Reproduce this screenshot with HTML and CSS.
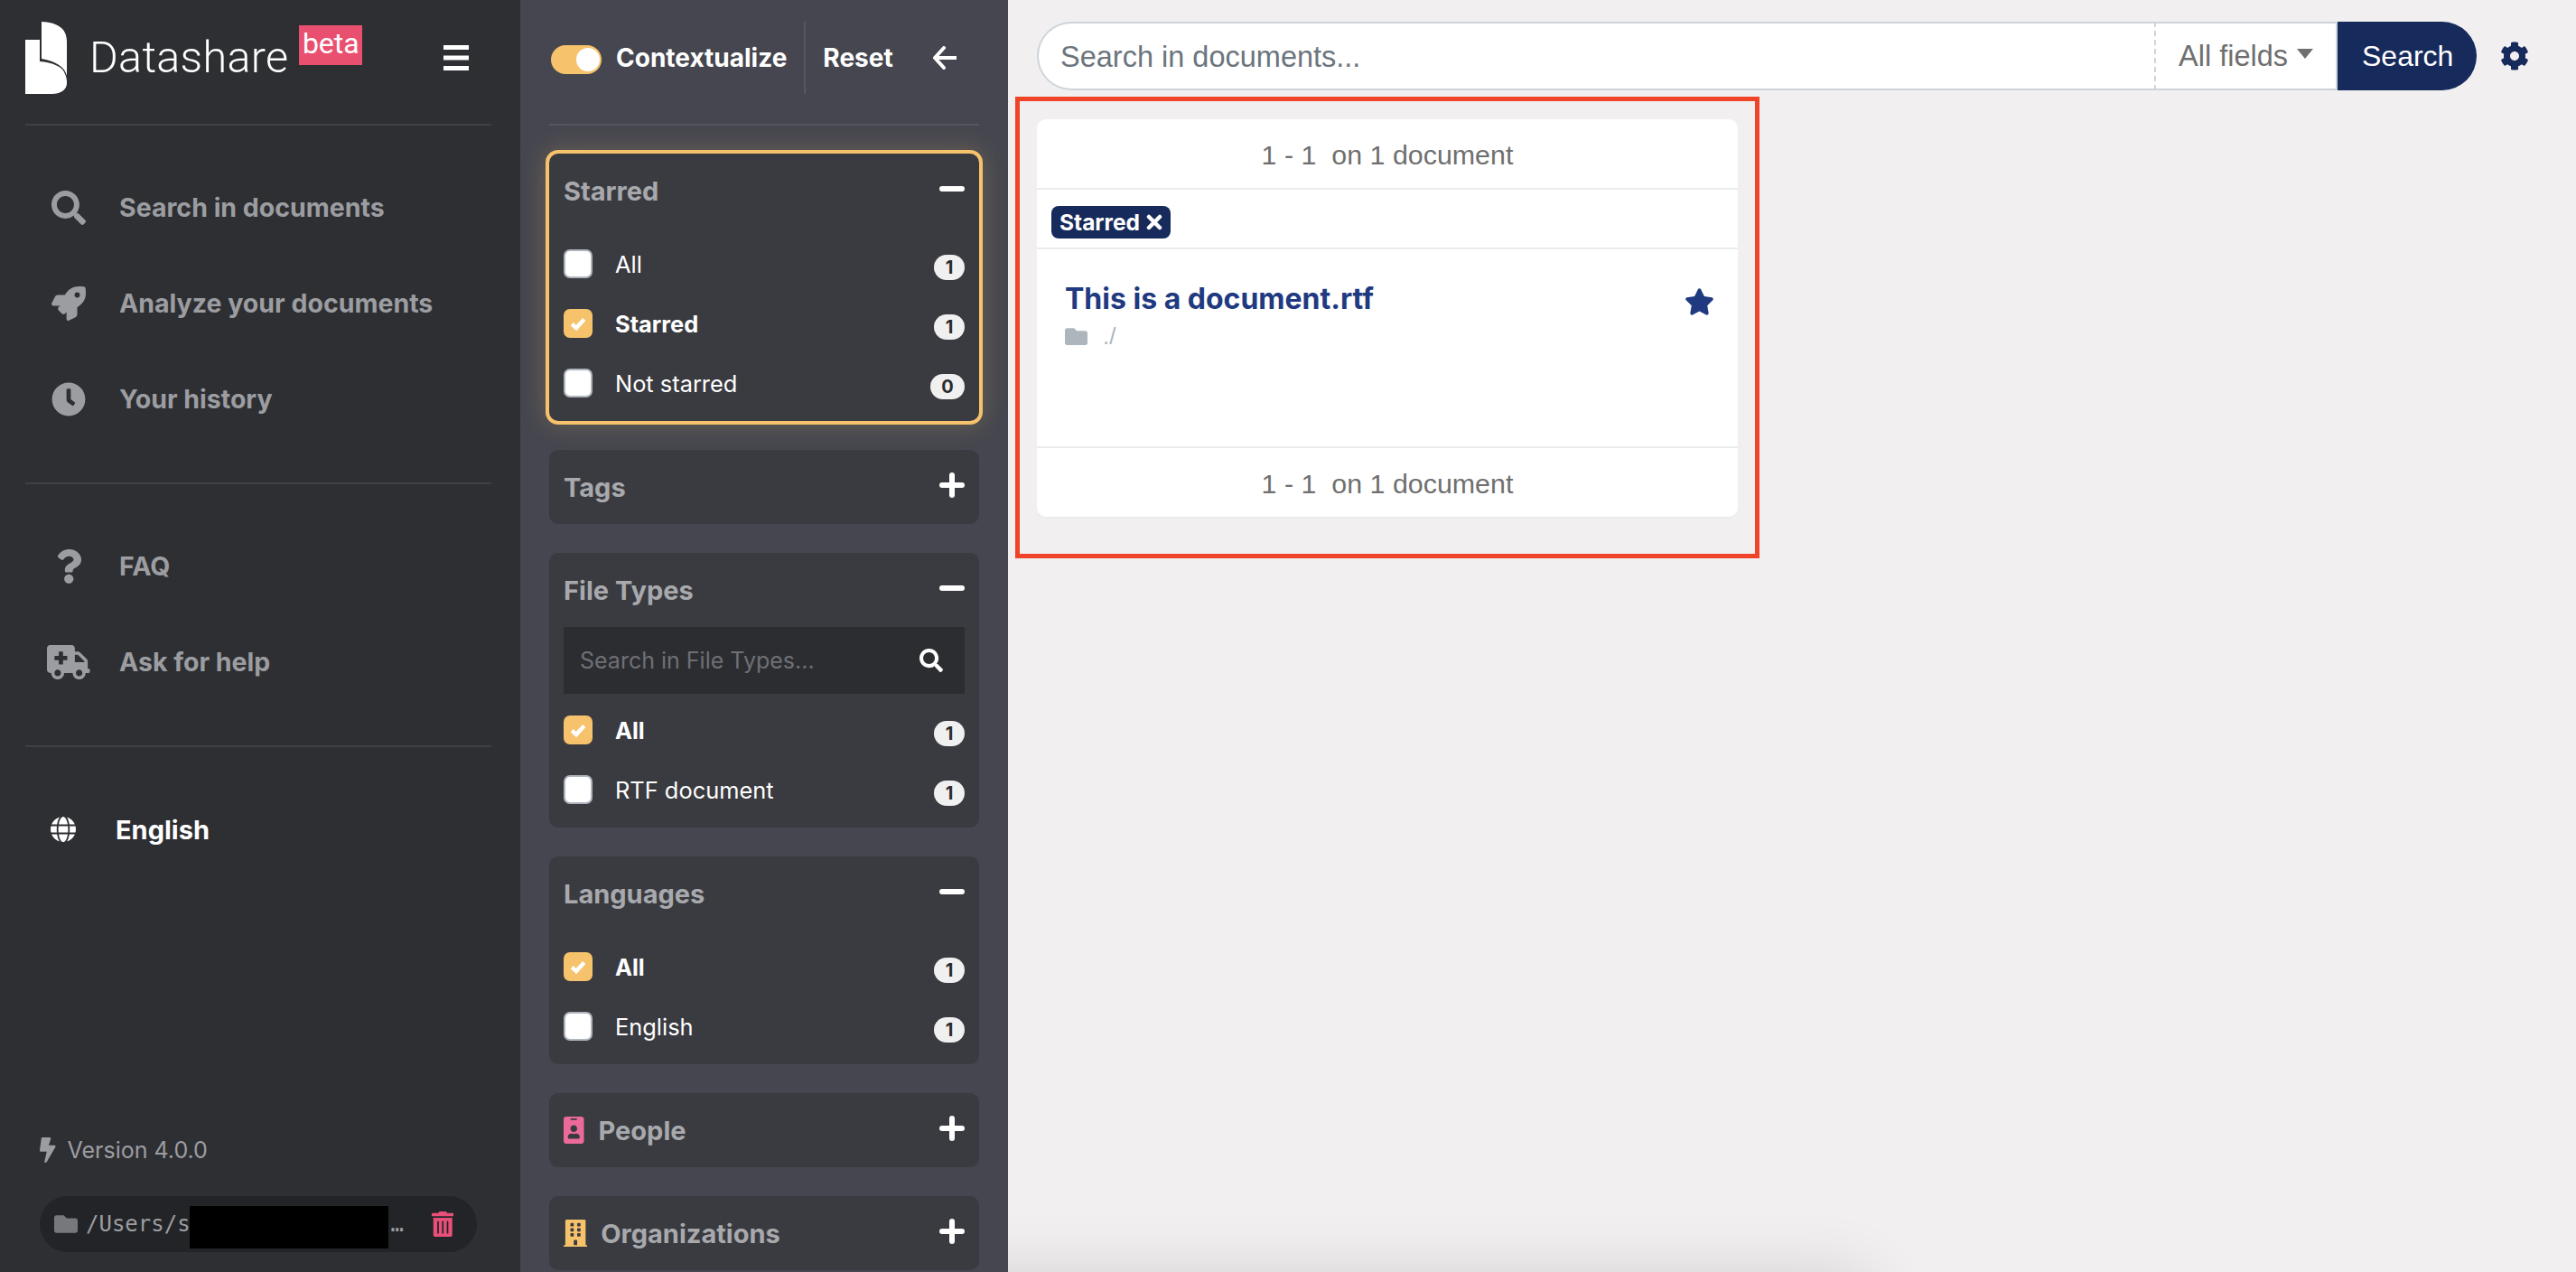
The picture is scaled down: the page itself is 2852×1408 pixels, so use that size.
FILE: index.html
```html
<!DOCTYPE html>
<html>

<head>
  <title>Datashare</title>
  <meta charset="UTF-8">
  <link rel="stylesheet" href="styles.css">
</head>

<body>
  <div class="sidebar">
    <div class="brand">
      <svg class="logo" viewBox="0 0 46 80">
        <path d="M18 0C34 1 46 6 46 22V60C44 50 34 44 18 41Z" />
        <path d="M0 20H16V44C30 45 42 50 44 58C46 62 46 66 46 68C46 76 38 80 30 80H0Z" />
      </svg>
      <span class="brand-name">Datashare</span>
      <span class="beta">beta</span>
      <svg class="bars" viewBox="0 0 28 28">
        <rect y="0" width="28" height="5" />
        <rect y="11.5" width="28" height="5" />
        <rect y="23" width="28" height="5" />
      </svg>
    </div>

    <div class="nav-group">
      <div class="nav-item">
        <span class="nav-icon"><svg viewBox="0 0 512 512"><path d="M505 442.7L405.3 343c-4.5-4.5-10.6-7-17-7H372c27.6-35.3 44-79.7 44-128C416 93.1 322.9 0 208 0S0 93.1 0 208s93.1 208 208 208c48.3 0 92.7-16.4 128-44v16.3c0 6.4 2.5 12.5 7 17l99.7 99.7c9.4 9.4 24.6 9.4 33.9 0l28.3-28.3c9.4-9.4 9.4-24.6.1-34zM208 336c-70.7 0-128-57.2-128-128 0-70.7 57.2-128 128-128 70.7 0 128 57.2 128 128 0 70.7-57.2 128-128 128z" /></svg></span>
        Search in documents
      </div>
      <div class="nav-item">
        <span class="nav-icon"><svg viewBox="0 0 512 512"><path d="M505.12 19.09c-1.19-5.53-6.66-11-12.21-12.19C460.72 0 435.51 0 410.41 0 307.18 0 245.27 55.2 199.05 128H94.84c-16.35.02-35.56 11.88-42.89 26.48L2.52 253.3A28.4 28.4 0 0 0 0 264a24 24 0 0 0 24 24h103.82l-22.48 22.47c-11.36 11.36-13 32.26 0 45.25l50.91 50.91c11.16 11.19 32.16 13.16 45.28 0l22.47-22.47V488a24 24 0 0 0 24 24 28.56 28.56 0 0 0 10.71-2.52l98.73-49.39c14.63-7.3 26.51-26.5 26.51-42.86V312.8c72.6-46.31 128.03-108.41 128.03-211.1.02-25.2.02-50.4-6.93-82.61zM384.04 168a40 40 0 1 1 40.01-40 40.02 40.02 0 0 1-40.01 40z" /></svg></span>
        Analyze your documents
      </div>
      <div class="nav-item">
        <span class="nav-icon"><svg viewBox="0 0 512 512"><path d="M256 8C119 8 8 119 8 256s111 248 248 248 248-111 248-248S393 8 256 8zm92.49 313l-20 25a16 16 0 0 1-22.49 2.5l-67-49.72a40 40 0 0 1-15-31.23V112a16 16 0 0 1 16-16h32a16 16 0 0 1 16 16v144l58 42.5a16 16 0 0 1 2.49 22.5z" /></svg></span>
        Your history
      </div>
    </div>

    <div class="nav-group">
      <div class="nav-item">
        <span class="nav-icon"><svg viewBox="0 0 384 512"><path d="M202.021 0C122.202 0 70.503 32.703 29.914 91.026c-7.363 10.58-5.093 25.086 5.178 32.874l43.138 32.709c10.373 7.865 25.132 6.026 33.253-4.148 25.049-31.381 43.63-49.449 82.757-49.449 30.764 0 68.816 19.799 68.816 49.631 0 22.552-18.617 34.134-48.993 51.164-35.423 19.86-82.299 44.576-82.299 106.405V320c0 13.255 10.745 24 24 24h72.471c13.255 0 24-10.745 24-24v-5.773c0-42.86 125.268-44.645 125.268-160.627C377.504 66.256 286.902 0 202.021 0zM192 373.459c-38.196 0-69.271 31.075-69.271 69.271 0 38.195 31.075 69.27 69.271 69.27s69.271-31.075 69.271-69.271-31.075-69.27-69.271-69.27z" /></svg></span>
        FAQ
      </div>
      <div class="nav-item">
        <span class="nav-icon"><svg viewBox="0 0 640 512"><path d="M624 352h-16V243.9c0-12.7-5.1-24.9-14.1-33.9L494 110.1c-9-9-21.2-14.1-33.9-14.1H416V48c0-26.5-21.5-48-48-48H48C21.5 0 0 21.5 0 48v320c0 26.5 21.5 48 48 48h16c0 53 43 96 96 96s96-43 96-96h128c0 53 43 96 96 96s96-43 96-96h48c8.8 0 16-7.2 16-16v-32c0-8.8-7.2-16-16-16zM160 464c-26.5 0-48-21.5-48-48s21.5-48 48-48 48 21.5 48 48-21.5 48-48 48zm144-248c0 4.4-3.6 8-8 8h-56v56c0 4.4-3.6 8-8 8h-48c-4.4 0-8-3.6-8-8v-56h-56c-4.4 0-8-3.6-8-8v-48c0-4.4 3.6-8 8-8h56v-56c0-4.4 3.6-8 8-8h48c4.4 0 8 3.6 8 8v56h56c4.4 0 8 3.6 8 8v48zm176 248c-26.5 0-48-21.5-48-48s21.5-48 48-48 48 21.5 48 48-21.5 48-48 48zm80-208H416V144h44.1l99.9 99.9V256z" /></svg></span>
        Ask for help
      </div>
    </div>

    <div class="language">
      <svg class="globe" viewBox="0 0 496 512"><path d="M336.5 160C322 70.7 287.8 8 248 8s-74 62.7-88.5 152h177zM152 256c0 22.2 1.2 43.5 3.3 64h185.3c2.1-20.5 3.3-41.8 3.3-64s-1.2-43.5-3.3-64H155.3c-2.1 20.5-3.3 41.8-3.3 64zm324.7-96c-28.6-67.9-86.5-120.4-158-141.6 24.4 33.8 41.2 84.7 50 141.6h108zM177.2 18.4C105.8 39.6 47.8 92.1 19.3 160h108c8.7-56.9 25.5-107.8 49.9-141.6zM487.4 192H372.7c2.1 21 3.3 42.5 3.3 64s-1.2 43-3.3 64h114.6c5.5-20.5 8.6-41.8 8.6-64s-3.1-43.5-8.5-64zM120 256c0-21.5 1.2-43 3.3-64H8.6C3.2 212.5 0 233.8 0 256s3.2 43.5 8.6 64h114.6c-2-21-3.2-42.5-3.2-64zm39.5 96c14.5 89.3 48.7 152 88.5 152s74-62.7 88.5-152h-177zm159.3 141.6c71.4-21.2 129.4-73.7 158-141.6h-108c-8.8 56.9-25.6 107.8-50 141.6zM19.3 352c28.6 67.9 86.5 120.4 158 141.6-24.4-33.8-41.2-84.7-50-141.6h-108z" /></svg>
      English
    </div>

    <div class="sidebar-foot">
      <div class="version">
        <svg viewBox="0 0 320 512"><path d="M296 160H180.6l42.6-129.8C227.2 15 215.7 0 200 0H56C44 0 33.8 8.9 32.2 20.8l-32 240C-1.7 275.2 9.5 288 24 288h118.7L96.6 482.5c-3.6 15.2 8 29.5 23.3 29.5 8.4 0 16.4-4.4 20.8-12l176-304c9.3-15.9-2.2-36-20.7-36z" /></svg>
        Version 4.0.0
      </div>
      <div class="project">
        <svg class="project-folder" viewBox="0 0 512 512"><path d="M464 128H272l-64-64H48C21.49 64 0 85.49 0 112v288c0 26.51 21.49 48 48 48h416c26.51 0 48-21.49 48-48V176c0-26.51-21.49-48-48-48z" /></svg>
        <span class="project-path">/Users/s</span>
        <span class="redacted"></span>
        <span class="project-path project-end">…</span>
        <svg class="project-trash" viewBox="0 0 448 512"><path d="M32 464a48 48 0 0 0 48 48h288a48 48 0 0 0 48-48V128H32zm272-256a16 16 0 0 1 32 0v224a16 16 0 0 1-32 0zm-96 0a16 16 0 0 1 32 0v224a16 16 0 0 1-32 0zm-96 0a16 16 0 0 1 32 0v224a16 16 0 0 1-32 0zM432 32H312l-9.4-18.7A24 24 0 0 0 281.1 0H166.8a23.72 23.72 0 0 0-21.4 13.3L136 32H16A16 16 0 0 0 0 48v32a16 16 0 0 0 16 16h416a16 16 0 0 0 16-16V48a16 16 0 0 0-16-16z" /></svg>
      </div>
    </div>
  </div>

  <div class="filters">
    <div class="filters-head">
      <span class="toggle"><span class="toggle-knob"></span></span>
      <span class="context">Contextualize</span>
      <span class="reset">Reset</span>
      <svg class="back" viewBox="0 0 26 26"><path d="M12 2L2 13L12 24M3 13H26" /></svg>
    </div>

    <div class="filter-list">
      <div class="filter filter-active">
        <div class="filter-title">Starred<span class="minus"></span></div>
        <div class="filter-items">
          <div class="row"><span class="box"></span>All<span class="count">1</span></div>
          <div class="row row-on"><span class="box box-on"><svg viewBox="0 0 16 16"><path d="M2 8.5L6.2 12.5L14 4" /></svg></span>Starred<span class="count">1</span></div>
          <div class="row"><span class="box"></span>Not starred<span class="count count-wide">0</span></div>
        </div>
      </div>

      <div class="filter">
        <div class="filter-title">Tags<span class="plus"></span></div>
      </div>

      <div class="filter">
        <div class="filter-title">File Types<span class="minus"></span></div>
        <div class="filter-search">
          Search in File Types...
          <svg viewBox="0 0 512 512"><path d="M505 442.7L405.3 343c-4.5-4.5-10.6-7-17-7H372c27.6-35.3 44-79.7 44-128C416 93.1 322.9 0 208 0S0 93.1 0 208s93.1 208 208 208c48.3 0 92.7-16.4 128-44v16.3c0 6.4 2.5 12.5 7 17l99.7 99.7c9.4 9.4 24.6 9.4 33.9 0l28.3-28.3c9.4-9.4 9.4-24.6.1-34zM208 336c-70.7 0-128-57.2-128-128 0-70.7 57.2-128 128-128 70.7 0 128 57.2 128 128 0 70.7-57.2 128-128 128z" /></svg>
        </div>
        <div class="filter-items">
          <div class="row row-on"><span class="box box-on"><svg viewBox="0 0 16 16"><path d="M2 8.5L6.2 12.5L14 4" /></svg></span>All<span class="count">1</span></div>
          <div class="row"><span class="box"></span>RTF document<span class="count">1</span></div>
        </div>
      </div>

      <div class="filter">
        <div class="filter-title">Languages<span class="minus"></span></div>
        <div class="filter-items">
          <div class="row row-on"><span class="box box-on"><svg viewBox="0 0 16 16"><path d="M2 8.5L6.2 12.5L14 4" /></svg></span>All<span class="count">1</span></div>
          <div class="row"><span class="box"></span>English<span class="count">1</span></div>
        </div>
      </div>

      <div class="filter">
        <div class="filter-title">
          <svg class="title-icon icon-people" viewBox="0 0 384 512"><path d="M336 0H48C21.5 0 0 21.5 0 48v416c0 26.5 21.5 48 48 48h288c26.5 0 48-21.5 48-48V48c0-26.5-21.5-48-48-48zM144 32h96c8.8 0 16 7.2 16 16s-7.2 16-16 16h-96c-8.8 0-16-7.2-16-16s7.2-16 16-16zm48 128c35.3 0 64 28.7 64 64s-28.7 64-64 64-64-28.7-64-64 28.7-64 64-64zm112 236.8c0 10.6-10 19.2-22.4 19.2H102.4C90 416 80 407.4 80 396.8v-19.2c0-31.8 30.1-57.6 67.2-57.6h5c12.3 5.1 25.7 8 39.8 8s27.6-2.9 39.8-8h5c37.1 0 67.2 25.8 67.2 57.6v19.2z" /></svg>
          People<span class="plus"></span>
        </div>
      </div>

      <div class="filter">
        <div class="filter-title">
          <svg class="title-icon icon-org" viewBox="0 0 448 512"><path d="M436 480h-20V24c0-13.255-10.745-24-24-24H56C42.745 0 32 10.745 32 24v456H12c-6.627 0-12 5.373-12 12v20h448v-20c0-6.627-5.373-12-12-12zM128 76c0-6.627 5.373-12 12-12h40c6.627 0 12 5.373 12 12v40c0 6.627-5.373 12-12 12h-40c-6.627 0-12-5.373-12-12V76zm0 96c0-6.627 5.373-12 12-12h40c6.627 0 12 5.373 12 12v40c0 6.627-5.373 12-12 12h-40c-6.627 0-12-5.373-12-12v-40zm52 148h-40c-6.627 0-12-5.373-12-12v-40c0-6.627 5.373-12 12-12h40c6.627 0 12 5.373 12 12v40c0 6.627-5.373 12-12 12zm76 160h-64v-84c0-6.627 5.373-12 12-12h40c6.627 0 12 5.373 12 12v84zm64-172c0 6.627-5.373 12-12 12h-40c-6.627 0-12-5.373-12-12v-40c0-6.627 5.373-12 12-12h40c6.627 0 12 5.373 12 12v40zm0-96c0 6.627-5.373 12-12 12h-40c-6.627 0-12-5.373-12-12v-40c0-6.627 5.373-12 12-12h40c6.627 0 12 5.373 12 12v40zm0-96c0 6.627-5.373 12-12 12h-40c-6.627 0-12-5.373-12-12V76c0-6.627 5.373-12 12-12h40c6.627 0 12 5.373 12 12v40z" /></svg>
          Organizations<span class="plus"></span>
        </div>
      </div>
    </div>
  </div>

  <div class="main">
    <div class="search-row">
      <div class="search-bar">
        <div class="search-input">Search in documents...</div>
        <div class="search-field">All fields<span class="caret"></span></div>
        <div class="search-button">Search</div>
      </div>
      <svg class="gear" viewBox="0 0 512 512"><path d="M487.4 315.7l-42.6-24.6c4.3-23.2 4.3-47 0-70.2l42.6-24.6c4.9-2.8 7.1-8.6 5.5-14-11.1-35.6-30-67.8-54.7-94.6-3.8-4.1-10-5.1-14.8-2.3L380.8 110c-17.9-15.4-38.5-27.3-60.8-35.1V25.8c0-5.6-3.9-10.5-9.4-11.7-36.7-8.2-74.3-7.8-109.2 0-5.5 1.2-9.4 6.1-9.4 11.7V75c-22.2 7.9-42.8 19.8-60.8 35.1L88.7 85.5c-4.9-2.8-11-1.9-14.8 2.3-24.7 26.7-43.6 58.9-54.7 94.6-1.7 5.4.6 11.2 5.5 14L67.3 221c-4.3 23.2-4.3 47 0 70.2l-42.6 24.6c-4.9 2.8-7.1 8.6-5.5 14 11.1 35.6 30 67.8 54.7 94.6 3.8 4.1 10 5.1 14.8 2.3l42.6-24.6c17.9 15.4 38.5 27.3 60.8 35.1v49.2c0 5.6 3.9 10.5 9.4 11.7 36.7 8.2 74.3 7.8 109.2 0 5.5-1.2 9.4-6.1 9.4-11.7v-49.2c22.2-7.9 42.8-19.8 60.8-35.1l42.6 24.6c4.9 2.8 11 1.9 14.8-2.3 24.7-26.7 43.6-58.9 54.7-94.6 1.5-5.5-.7-11.3-5.6-14.1zM256 336c-44.1 0-80-35.9-80-80s35.9-80 80-80 80 35.9 80 80-35.9 80-80 80z" /></svg>
    </div>

    <div class="highlight">
      <div class="results">
        <div class="results-count">1 - 1&nbsp; on 1 document</div>
        <div class="results-tags">
          <span class="tag">Starred
            <svg viewBox="0 0 12 12"><path d="M2 2L10 10M10 2L2 10" /></svg>
          </span>
        </div>
        <div class="doc">
          <div class="doc-info">
            <div class="doc-title">This is a document.rtf</div>
            <div class="doc-path">
              <svg viewBox="0 0 512 512"><path d="M464 128H272l-64-64H48C21.49 64 0 85.49 0 112v288c0 26.51 21.49 48 48 48h416c26.51 0 48-21.49 48-48V176c0-26.51-21.49-48-48-48z" /></svg>
              ./
            </div>
          </div>
          <svg class="doc-star" viewBox="0 0 576 512"><path d="M259.3 17.8L194 150.2 47.9 171.5c-26.2 3.8-36.7 36.1-17.7 54.6l105.7 103-25 145.5c-4.5 26.3 23.2 46 46.4 33.7L288 439.6l130.7 68.7c23.2 12.2 50.9-7.4 46.4-33.7l-25-145.5 105.7-103c19-18.5 8.5-50.8-17.7-54.6L382 150.2 316.7 17.8c-11.7-23.6-45.6-23.9-57.4 0z" /></svg>
        </div>
        <div class="results-count results-foot">1 - 1&nbsp; on 1 document</div>
      </div>
    </div>

    <div class="bottom-shadow"></div>
  </div>
</body>

</html>
```

FILE: styles.css
```css
* {
  box-sizing: border-box;
}

body {
  margin: 0;
  height: 1408px;
  display: flex;
  overflow: hidden;
  font-family: Inter, "Liberation Sans", sans-serif;
  background-color: #f1eff0;
}

svg {
  display: block;
  fill: currentColor;
}

/* left menu */

.sidebar {
  width: 576px;
  flex-shrink: 0;
  display: flex;
  flex-direction: column;
  padding: 0 32px 22px 28px;
  background-color: #2e2f33;
}

.brand {
  height: 139px;
  flex-shrink: 0;
  display: flex;
  align-items: flex-start;
  color: #fff;
  border-bottom: 2px solid #3f4046;
}

.logo {
  width: 46px;
  height: 80px;
  margin-top: 24px;
}

.brand-name {
  margin: 35px 0 0 25px;
  font-family: Roboto, sans-serif;
  font-weight: 300;
  font-size: 48.5px;
  line-height: 58px;
  letter-spacing: 0.3px;
}

.beta {
  width: 70px;
  height: 44px;
  margin: 28px 0 0 12px;
  background-color: #e9506f;
  font-family: Roboto, sans-serif;
  font-size: 32px;
  line-height: 40px;
  text-align: center;
}

.bars {
  width: 28px;
  height: 28px;
  margin: 50px 0 0 90px;
}

.nav-group {
  padding: 38px 0 39px 24px;
  border-bottom: 2px solid #3f4046;
}

.nav-item {
  height: 106px;
  padding-bottom: 2px;
  display: flex;
  align-items: center;
  font-weight: 700;
  font-size: 28.5px;
  color: #9c9da1;
}

.nav-icon {
  width: 48px;
  margin: 2px 32px 0 0;
  display: flex;
  justify-content: center;
}

.nav-icon svg {
  height: 38px;
}

.language {
  height: 60px;
  margin-top: 61px;
  padding-left: 28px;
  display: flex;
  align-items: center;
  font-weight: 700;
  font-size: 29px;
  color: #fff;
}

.globe {
  width: 28px;
  height: 30px;
  margin-right: 44px;
}

.sidebar-foot {
  margin-top: auto;
  padding-left: 16px;
}

.version {
  height: 36px;
  margin-bottom: 33px;
  display: flex;
  align-items: center;
  gap: 13px;
  font-size: 25px;
  color: #9c9da1;
}

.version svg {
  height: 28px;
}

.project {
  width: 484px;
  height: 62px;
  padding: 0 26px 0 16px;
  display: flex;
  align-items: center;
  border-radius: 31px;
  background-color: #232427;
}

.project-folder {
  width: 26px;
  height: 26px;
  margin-right: 9px;
  color: #77787b;
}

.project-path {
  font-family: "DejaVu Sans Mono", monospace;
  font-size: 24px;
  color: #9c9da1;
}

.redacted {
  width: 220px;
  height: 47px;
  margin: 7px 3px 0 -1px;
  background-color: #000;
}

.project-end {
  width: 22px;
}

.project-trash {
  height: 28px;
  margin-left: auto;
  color: #e8507a;
}

/* filters */

.filters {
  width: 540px;
  flex-shrink: 0;
  padding: 0 32px;
  background-color: #45464f;
}

.filters-head {
  height: 139px;
  padding: 24px 0 0 2px;
  display: flex;
  align-items: flex-start;
  color: #fff;
  font-weight: 700;
  font-size: 28px;
  border-bottom: 2px solid #55565e;
}

.toggle {
  width: 56px;
  height: 32px;
  margin-top: 26px;
  padding: 3px 2px;
  display: flex;
  justify-content: flex-end;
  border-radius: 16px;
  background-color: #f6c26b;
}

.toggle-knob {
  width: 26px;
  height: 26px;
  border-radius: 50%;
  background-color: #fff;
}

.context {
  height: 80px;
  line-height: 80px;
  margin-left: 16px;
  padding-right: 19px;
  border-right: 2px solid #55565e;
}

.reset {
  line-height: 80px;
  margin-left: 19px;
}

.back {
  width: 26px;
  height: 26px;
  margin: 27px 0 0 44px;
  fill: none;
  stroke: #fff;
  stroke-width: 4;
  stroke-linecap: round;
  stroke-linejoin: round;
}

.filter-list {
  padding-top: 31px;
  display: flex;
  flex-direction: column;
  gap: 32px;
}

.filter {
  padding: 0 16px;
  border-radius: 10px;
  background-color: #3a3b40;
}

.filter-active {
  box-shadow: 0 0 0 4px #f6c26b, 0 0 26px 6px rgba(246, 194, 107, 0.2);
}

.filter-title {
  height: 82px;
  display: flex;
  align-items: center;
  font-weight: 700;
  font-size: 29px;
  color: #a8a9ad;
}

.minus,
.plus {
  width: 28px;
  height: 28px;
  margin-left: auto;
  position: relative;
  flex-shrink: 0;
}

.minus::before,
.plus::before,
.plus::after {
  content: "";
  position: absolute;
  left: 0;
  top: 9px;
  width: 28px;
  height: 6px;
  border-radius: 3px;
  background-color: #fff;
}

.plus::after {
  left: 11px;
  top: -2px;
  width: 6px;
  height: 28px;
}

.title-icon {
  height: 30px;
  margin-right: 16px;
}

.icon-people {
  color: #ec6a9a;
}

.icon-org {
  margin-right: 15px;
  color: #f6c26b;
}

.filter-search {
  height: 74px;
  padding: 0 24px 0 18px;
  display: flex;
  align-items: center;
  justify-content: space-between;
  font-size: 25px;
  color: #6f7076;
  background-color: #2c2d31;
}

.filter-search svg {
  width: 26px;
  color: #fff;
}

.filter-items {
  padding: 8px 0;
}

.row {
  height: 66px;
  padding-bottom: 2px;
  display: flex;
  align-items: center;
  font-size: 25.4px;
  color: #fff;
}

.row-on {
  font-weight: 700;
}

.box {
  width: 32px;
  height: 32px;
  margin-right: 25px;
  border: 2px solid #adb5bd;
  border-radius: 7px;
  background-color: #fff;
}

.box-on {
  padding: 5px;
  border-color: #f6c26b;
  background-color: #f6c26b;
}

.box-on svg {
  fill: none;
  stroke: #fff;
  stroke-width: 4;
}

.count {
  min-width: 34px;
  height: 28px;
  margin: 8px 0 0 auto;
  padding: 0 8px;
  border-radius: 14px;
  background-color: #f0f0f0;
  color: #2a2b2e;
  font-weight: 700;
  font-size: 20px;
  line-height: 28px;
  text-align: center;
}

.count-wide {
  min-width: 38px;
}

/* main */

.main {
  flex: 1;
  padding: 24px 0 0 32px;
  position: relative;
  overflow: hidden;
}

.search-row {
  display: flex;
  align-items: center;
}

.search-bar {
  width: 1594px;
  height: 76px;
  display: flex;
  font-family: "Liberation Sans", sans-serif;
  font-size: 32.5px;
}

.search-input {
  flex: 1;
  padding-left: 24px;
  line-height: 74px;
  color: #6c757d;
  background-color: #fff;
  border: 2px solid #ced4da;
  border-right: 2px dashed #ced4da;
  border-radius: 38px 0 0 38px;
}

.search-field {
  width: 201px;
  padding-left: 25px;
  display: flex;
  align-items: center;
  color: #6f6f6f;
  background-color: #fff;
  border: 2px solid #ced4da;
  border-left: 0;
}

.caret {
  margin: -6px 0 0 10px;
  border-top: 11px solid #6f6f6f;
  border-left: 9px solid transparent;
  border-right: 9px solid transparent;
}

.search-button {
  width: 154px;
  padding-left: 27px;
  font-size: 32px;
  line-height: 76px;
  color: #fff;
  background-color: #162a5b;
  border-radius: 0 38px 38px 0;
}

.gear {
  width: 32px;
  height: 38px;
  margin-left: 26px;
  color: #162a5b;
}

.highlight {
  width: 824px;
  height: 511px;
  margin: 7px 0 0 -24px;
  padding: 20px 0 0 19px;
  border: 5px solid #ef4427;
}

.results {
  width: 776px;
  height: 440px;
  display: flex;
  flex-direction: column;
  border-radius: 10px;
  background-color: #fff;
  box-shadow: 0 2px 0 #e9ecef;
  font-family: "Liberation Sans", sans-serif;
}

.results-count {
  height: 78px;
  font-size: 30.4px;
  line-height: 78px;
  text-align: center;
  color: #6f6f6f;
  border-bottom: 2px solid #e9ecef;
}

.results-foot {
  border-bottom: 0;
  border-top: 2px solid #e9ecef;
}

.results-tags {
  height: 66px;
  padding: 18px 0 0 16px;
  border-bottom: 2px solid #e9ecef;
}

.tag {
  width: 132px;
  height: 36px;
  padding-left: 9px;
  display: flex;
  align-items: center;
  gap: 7px;
  border-radius: 8px;
  color: #fff;
  background-color: #162a5b;
  font-family: Inter, sans-serif;
  font-weight: 700;
  font-size: 24.5px;
}

.tag svg {
  width: 18px;
  height: 18px;
  stroke: #fff;
  stroke-width: 3;
  stroke-linecap: round;
}

.doc {
  flex: 1;
  padding: 35px 26px 0 31px;
  display: flex;
  justify-content: space-between;
  align-items: flex-start;
}

.doc-title {
  font-family: Inter, sans-serif;
  font-weight: 700;
  font-size: 32px;
  line-height: 40px;
  color: #1f3a80;
}

.doc-path {
  margin-top: 6px;
  display: flex;
  align-items: center;
  gap: 17px;
  font-size: 26px;
  line-height: 30px;
  color: #adb5bd;
}

.doc-path svg {
  width: 25px;
  height: 25px;
}

.doc-star {
  width: 33px;
  height: 30px;
  margin-top: 8px;
  color: #1f3a80;
}

.bottom-shadow {
  position: absolute;
  left: -100px;
  top: 1408px;
  width: 1052px;
  height: 200px;
  box-shadow: 0 0 70px rgba(0, 0, 0, 0.12);
}
```
